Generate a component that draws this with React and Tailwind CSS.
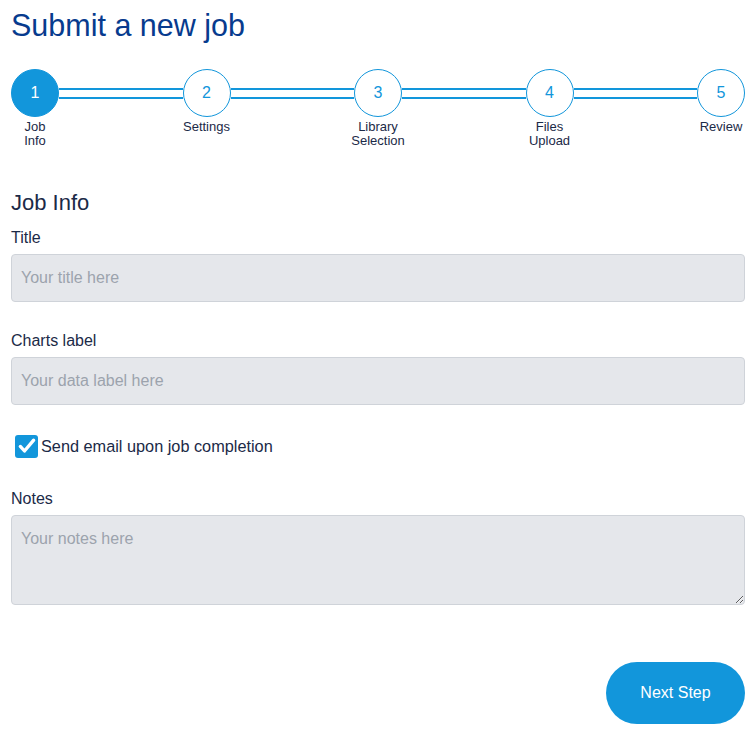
import React, { useState } from 'react';

const steps = [
    { n: 1, label: ['Job', 'Info'] },
    { n: 2, label: ['Settings'] },
    { n: 3, label: ['Library', 'Selection'] },
    { n: 4, label: ['Files', 'Upload'] },
    { n: 5, label: ['Review'] },
];

const Stepper = ({ active }) => (
    <div className="flex items-start">
        {steps.map((step, i) => (
            <React.Fragment key={step.n}>
                {i > 0 && <div className="flex-1 h-[11px] mt-[19px] border-y-2 border-[#1296db]" />}
                <div className="w-12 flex flex-col items-center">
                    <div
                        className={`w-12 h-12 rounded-full border border-[#1296db] flex items-center justify-center text-[16px] ${step.n === active ? 'bg-[#1296db] text-white' : 'bg-white text-[#1296db]'
                            }`}
                    >
                        {step.n}
                    </div>
                    <div className="mt-[3px] text-[13px] leading-[14px] text-[#1b2a47] text-center whitespace-nowrap">
                        {step.label.map((l) => (
                            <div key={l}>{l}</div>
                        ))}
                    </div>
                </div>
            </React.Fragment>
        ))}
    </div>
);

const inputCls =
    'w-full h-12 px-[9px] rounded-[4px] border border-[#cfd3d9] bg-[#e5e7eb] text-[16px] text-[#1b2a47] placeholder:text-[#9ca3ad] outline-none';

export default function App() {
    const [sendEmail, setSendEmail] = useState(true);

    return (
        <div className="min-h-screen bg-white px-[11px] pt-[7px] pb-[9px] font-['Liberation_Sans',Arial,sans-serif]">
            <h1 className="text-[30.5px] leading-[36px] text-[#073b8e]">Submit a new job</h1>

            <div className="mt-[26px]">
                <Stepper active={1} />
            </div>

            {/* Job info form */}
            <h2 className="mt-[41px] text-[22px] leading-[28px] text-[#1b2a47]">Job Info</h2>

            <div className="mt-[9px]">
                <label className="block text-[16px] leading-[24px] text-[#1b2a47] mb-[4px]">Title</label>
                <input className={inputCls} placeholder="Your title here" />
            </div>

            <div className="mt-[27px]">
                <label className="block text-[16px] leading-[24px] text-[#1b2a47] mb-[4px]">Charts label</label>
                <input className={inputCls} placeholder="Your data label here" />
            </div>

            <button
                type="button"
                onClick={() => setSendEmail(!sendEmail)}
                className="mt-[29px] ml-[4px] flex items-center gap-[3px] text-[16.3px] leading-[24px] text-[#1b2a47]"
            >
                <span
                    className={`w-[23px] h-[23px] rounded-[3px] flex items-center justify-center ${sendEmail ? 'bg-[#1296db]' : 'bg-white border border-[#9ca3ad]'
                        }`}
                >
                    {sendEmail && (
                        <svg width="20" height="20" viewBox="0 0 24 24" fill="none" stroke="white" strokeWidth="4" strokeLinecap="round" strokeLinejoin="round">
                            <path d="M4 12.5l5 5.5L20 5" />
                        </svg>
                    )}
                </span>
                Send email upon job completion
            </button>

            <div className="mt-[29px]">
                <label className="block text-[16px] leading-[24px] text-[#1b2a47] mb-[4px]">Notes</label>
                <textarea
                    className="block w-full h-[90px] px-[9px] py-[12px] rounded-[4px] border border-[#cfd3d9] bg-[#e5e7eb] text-[16px] leading-[22px] text-[#1b2a47] placeholder:text-[#9ca3ad] outline-none"
                    placeholder="Your notes here"
                />
            </div>

            <div className="mt-[57px] flex justify-end">
                <button className="w-[139px] h-[62px] rounded-full bg-[#1296db] text-white text-[16px]">Next Step</button>
            </div>
        </div>
    );
}
